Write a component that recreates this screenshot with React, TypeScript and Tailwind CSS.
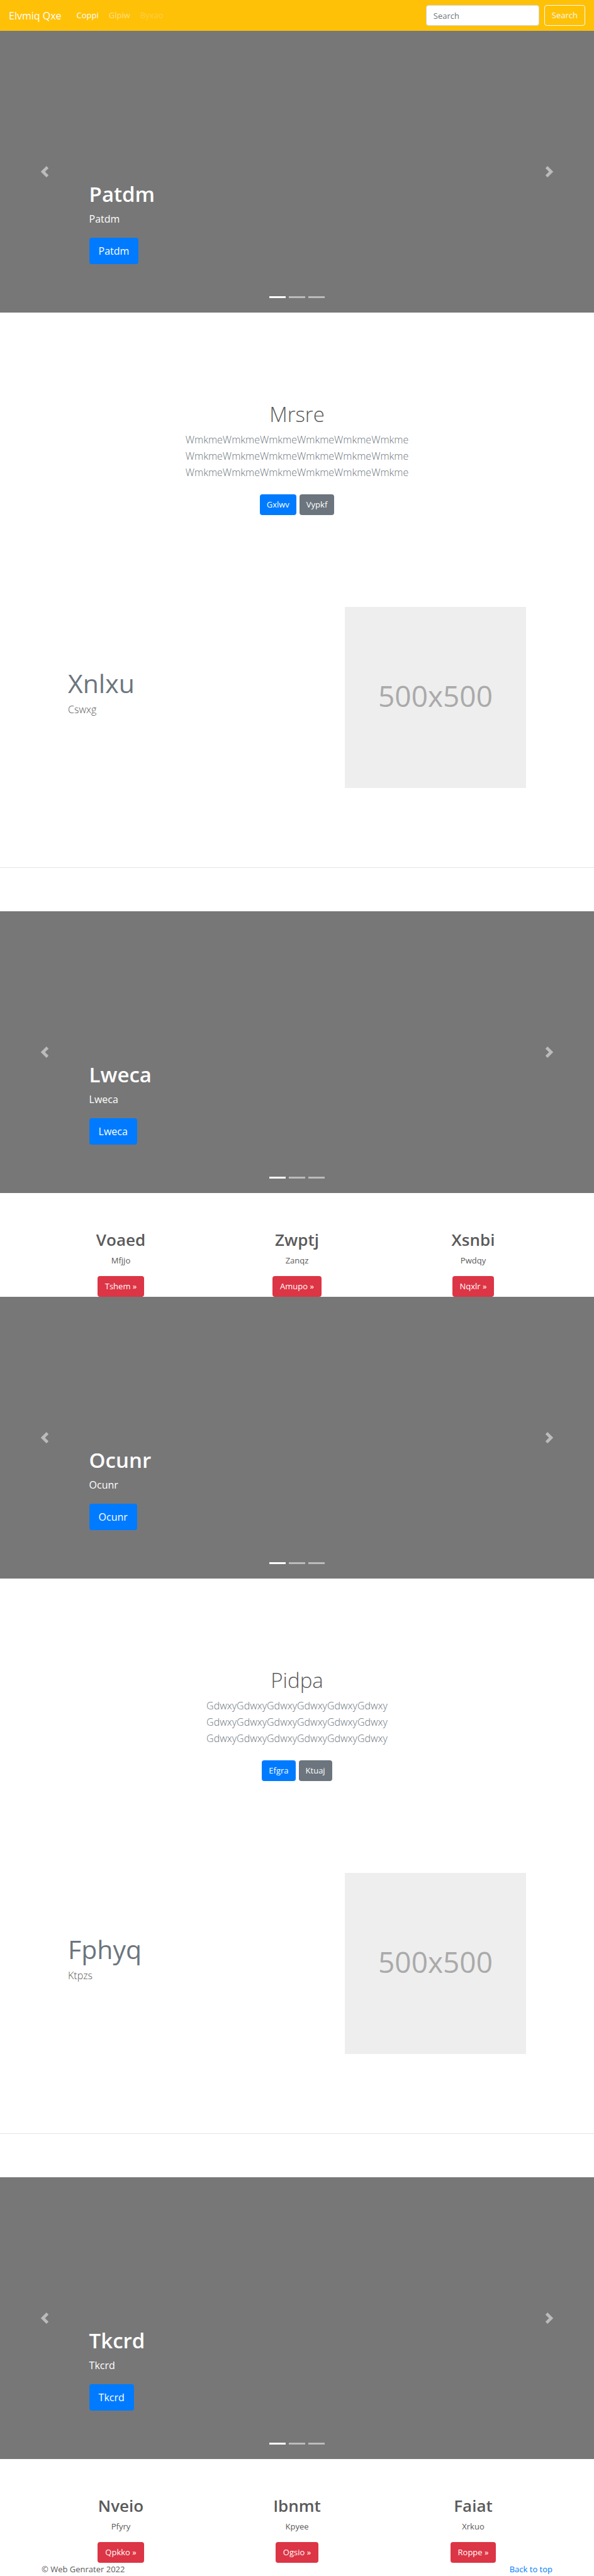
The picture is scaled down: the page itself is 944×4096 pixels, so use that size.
const indicatorLabels = ["First slide", "Second slide", "Third slide"];

function Navbar() {
  return (
    <nav className="flex items-center bg-[#ffc107] px-[14px] py-2">
      <a href="#top" className="mr-[24px] text-[16px] leading-[26px] text-white">
        Elvmiq Qxe
      </a>
      <ul className="flex flex-1 items-center gap-[16px] text-[13px] leading-[21px]">
        <li>
          <a href="#top" className="text-white">
            Coppi
          </a>
        </li>
        <li>
          <a href="#top" className="text-white/50">
            Glpiw
          </a>
        </li>
        <li>
          <a href="#top" aria-disabled="true" className="text-white/25">
            Byxao
          </a>
        </li>
      </ul>
      <form className="flex items-center gap-[8px]" onSubmit={(e) => e.preventDefault()}>
        <input
          type="text"
          aria-label="Search"
          placeholder="Search"
          className="h-[33px] w-[180px] rounded-[4px] border border-[#ced4da] bg-white px-[11px] text-[13px] text-[#495057] placeholder:text-[#6c757d]"
        />
        <button
          type="submit"
          className="h-[33px] rounded-[4px] border border-[#f8f9fa] px-[11px] text-[13px] leading-[21px] text-[#f8f9fa]"
        >
          Search
        </button>
      </form>
    </nav>
  );
}

function Carousel({ title }: { title: string }) {
  return (
    <section className="relative grid h-[448px] grid-cols-[15%_1fr_15%] bg-[#777] text-white">
      <button type="button" aria-label="Previous" className="flex items-center justify-center opacity-50">
        <svg viewBox="0 0 8 8" className="size-[18px]" fill="currentColor">
          <path d="M5.25 0l-4 4 4 4 1.5-1.5L4.25 4l2.5-2.5L5.25 0z" />
        </svg>
      </button>
      <div className="flex flex-col items-start justify-end pb-[77px]">
        <h1 className="text-[33px] leading-[42px] font-semibold">{title}</h1>
        <p className="mt-[5px] text-[16px] leading-[26px]">{title}</p>
        <a
          href="#top"
          className="mt-[17px] rounded-[4px] bg-[#007bff] px-[15px] py-2 text-[16px] leading-[26px]"
        >
          {title}
        </a>
      </div>
      <button type="button" aria-label="Next" className="flex items-center justify-center opacity-50">
        <svg viewBox="0 0 8 8" className="size-[18px]" fill="currentColor">
          <path d="M2.75 0l-1.5 1.5L3.75 4l-2.5 2.5L2.75 8l4-4-4-4z" />
        </svg>
      </button>
      <div className="absolute inset-x-0 bottom-[23px] flex justify-center gap-[5px]">
        {indicatorLabels.map((label, i) => (
          <button
            key={label}
            type="button"
            aria-label={label}
            className={i === 0 ? "h-[3px] w-[26px] bg-white" : "h-[3px] w-[26px] bg-white/50"}
          />
        ))}
      </div>
    </section>
  );
}

type IntroProps = { title: string; word: string; primary: string; secondary: string };

function Intro({ title, word, primary, secondary }: IntroProps) {
  const line = word.repeat(6);
  return (
    <section className="flex flex-col items-center pt-[141px] text-center">
      <h1 className="text-[33px] leading-[42px] font-light">{title}</h1>
      <p className="mt-[6px] text-[16px] leading-[26px] font-light text-[#6c757d]">
        {line}
        <br />
        {line}
        <br />
        {line}
      </p>
      <div className="mt-[22px] flex gap-[5px] text-[13px] leading-[21px] text-white">
        <a href="#top" className="rounded-[4px] bg-[#007bff] px-[11px] py-[6px]">
          {primary}
        </a>
        <a href="#top" className="rounded-[4px] bg-[#6c757d] px-[11px] py-[6px]">
          {secondary}
        </a>
      </div>
    </section>
  );
}

function Feature({ title, text }: { title: string; text: string }) {
  return (
    <section className="mt-[146px] flex justify-between px-[108px]">
      <div className="pt-[99px]">
        <h2 className="text-[41px] leading-[44px] text-[#6c757d]">{title}</h2>
        <p className="mt-[7px] text-[16px] leading-[26px] font-light">{text}</p>
      </div>
      <div className="flex size-[288px] items-center justify-center bg-[#eee] pb-[6px] text-[46px] text-[#aaa]">
        500x500
      </div>
    </section>
  );
}

type Item = { title: string; text: string; action: string };

function Columns({ items }: { items: Item[] }) {
  return (
    <section className="grid grid-cols-3 px-[52px] pt-[57px]">
      {items.map((item) => (
        <div key={item.title} className="flex flex-col items-center">
          <h2 className="text-[26px] leading-[34px] font-semibold">{item.title}</h2>
          <p className="mt-[6px] text-[13px] leading-[21px]">{item.text}</p>
          <a
            href="#top"
            className="mt-[14px] rounded-[4px] bg-[#dc3545] px-[12px] py-[6px] text-[13px] leading-[21px] text-white"
          >
            {item.action} »
          </a>
        </div>
      ))}
    </section>
  );
}

export default function App() {
  return (
    <div id="top" className="bg-white font-['Open_Sans','Noto_Sans',sans-serif] text-[#5a5a5a]">
      <Navbar />
      <main>
        <Carousel title="Patdm" />
        <Intro title="Mrsre" word="Wmkme" primary="Gxlwv" secondary="Vypkf" />
        <Feature title="Xnlxu" text="Cswxg" />
        <hr className="mt-[126px] mb-[69px] border-t border-black/10" />
        <Carousel title="Lweca" />
        <Columns
          items={[
            { title: "Voaed", text: "Mfjjo", action: "Tshem" },
            { title: "Zwptj", text: "Zanqz", action: "Amupo" },
            { title: "Xsnbi", text: "Pwdqy", action: "Nqxlr" },
          ]}
        />
        <Carousel title="Ocunr" />
        <Intro title="Pidpa" word="Gdwxy" primary="Efgra" secondary="Ktuaj" />
        <Feature title="Fphyq" text="Ktpzs" />
        <hr className="mt-[126px] mb-[69px] border-t border-black/10" />
        <Carousel title="Tkcrd" />
        <Columns
          items={[
            { title: "Nveio", text: "Pfyry", action: "Qpkko" },
            { title: "Ibnmt", text: "Kpyee", action: "Ogsio" },
            { title: "Faiat", text: "Xrkuo", action: "Roppe" },
          ]}
        />
      </main>
      <footer className="flex justify-between px-[66px] text-[13px] leading-[21px]">
        <p>© Web Genrater 2022</p>
        <a href="#top" className="text-[#007bff]">
          Back to top
        </a>
      </footer>
    </div>
  );
}
